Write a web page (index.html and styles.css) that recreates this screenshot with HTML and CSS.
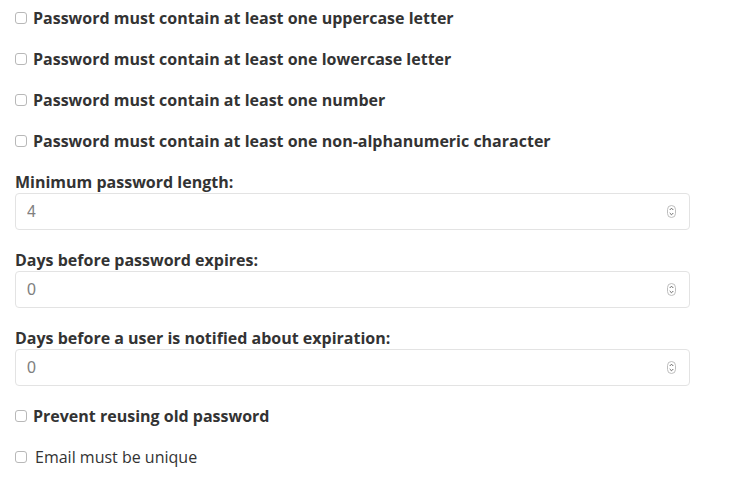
FILE: index.html
```html
<!DOCTYPE html>
<html>
<head>
<meta charset="utf-8">
<link rel="stylesheet" href="styles.css">
</head>
<body>
<form class="form">
  <label class="check bold"><input type="checkbox" class="cb">Password must contain at least one uppercase letter</label>
  <label class="check bold"><input type="checkbox" class="cb">Password must contain at least one lowercase letter</label>
  <label class="check bold"><input type="checkbox" class="cb">Password must contain at least one number</label>
  <label class="check bold"><input type="checkbox" class="cb">Password must contain at least one non-alphanumeric character</label>

  <div class="group">
    <label class="label">Minimum password length:</label>
    <div class="field"><input class="num" type="text" value="4" readonly><svg class="spin" width="9" height="13" viewBox="0 0 9 13"><rect x="0.5" y="0.5" width="8" height="12" rx="4" fill="#fff" stroke="#bdbdbd"/><path d="M2.7 5 L4.5 3.2 L6.3 5 M2.7 8 L4.5 9.8 L6.3 8" fill="none" stroke="#666" stroke-width="1"/></svg></div>
  </div>
  <div class="group">
    <label class="label">Days before password expires:</label>
    <div class="field"><input class="num" type="text" value="0" readonly><svg class="spin" width="9" height="13" viewBox="0 0 9 13"><rect x="0.5" y="0.5" width="8" height="12" rx="4" fill="#fff" stroke="#bdbdbd"/><path d="M2.7 5 L4.5 3.2 L6.3 5 M2.7 8 L4.5 9.8 L6.3 8" fill="none" stroke="#666" stroke-width="1"/></svg></div>
  </div>
  <div class="group">
    <label class="label">Days before a user is notified about expiration:</label>
    <div class="field"><input class="num" type="text" value="0" readonly><svg class="spin" width="9" height="13" viewBox="0 0 9 13"><rect x="0.5" y="0.5" width="8" height="12" rx="4" fill="#fff" stroke="#bdbdbd"/><path d="M2.7 5 L4.5 3.2 L6.3 5 M2.7 8 L4.5 9.8 L6.3 8" fill="none" stroke="#666" stroke-width="1"/></svg></div>
  </div>

  <label class="check bold"><input type="checkbox" class="cb">Prevent reusing old password</label>
  <label class="check normal"><input type="checkbox" class="cb">Email must be unique</label>
</form>
</body>
</html>
```

FILE: styles.css
```css
html, body {
  margin: 0;
  padding: 0;
  background: #fff;
}
body {
  font-family: "Open Sans", "Liberation Sans", sans-serif;
  color: #333;
  font-size: 16px;
}
.form {
  display: flex;
  flex-direction: column;
  gap: 19px;
  padding: 7px 0 0 15px;
  width: 675px;
}
.check {
  display: flex;
  align-items: center;
  line-height: 22px;
  height: 22px;
}
.bold { font-weight: 700; }
.normal { font-weight: 400; }
.cb {
  appearance: none;
  -webkit-appearance: none;
  width: 12px;
  height: 12px;
  margin: 0 6px 0 0;
  border: 1px solid #b8b8b8;
  border-radius: 3px;
  background: #fff;
  box-sizing: border-box;
  flex: none;
}
.normal .cb {
  margin-right: 8px;
}
.group {
  display: flex;
  flex-direction: column;
}
.label {
  font-weight: 700;
  line-height: 22px;
  height: 22px;
}
.field {
  display: flex;
  align-items: center;
  height: 37px;
  box-sizing: border-box;
  border: 1px solid #e3e3e3;
  border-radius: 4px;
  padding: 0 13px 0 11px;
  background: #fff;
}
.num {
  flex: 1;
  border: none;
  outline: none;
  padding: 0;
  margin: 0;
  font-family: "Liberation Sans", Arial, sans-serif;
  font-size: 16px;
  color: #808080;
  background: transparent;
}
.spin {
  flex: none;
  display: block;
}
```
